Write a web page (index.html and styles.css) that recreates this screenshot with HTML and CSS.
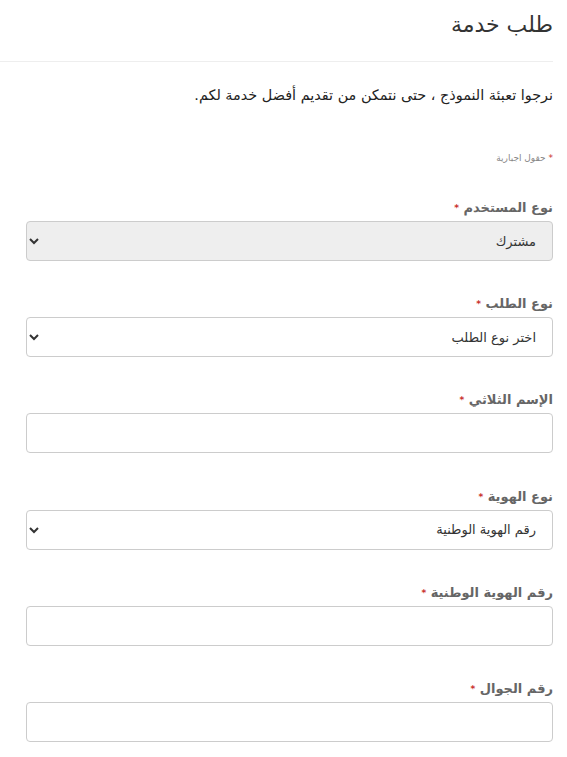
FILE: index.html
```html
<!DOCTYPE html>
<html lang="ar" dir="rtl">
<head>
<meta charset="utf-8">
<title>طلب خدمة</title>
<link rel="stylesheet" href="styles.css">
</head>
<body>
<main class="page">
  <header class="page-header">
    <h1 class="title">طلب خدمة</h1>
  </header>
  <p class="intro">نرجوا تعبئة النموذج ، حتى نتمكن من تقديم أفضل خدمة لكم.</p>
  <p class="required-note"><span class="star">*</span> حقول اجبارية</p>
  <form class="form">
    <div class="field">
      <label class="label">نوع المستخدم <span class="star">*</span></label>
      <select class="control select" disabled>
        <option>مشترك</option>
      </select>
    </div>
    <div class="field">
      <label class="label">نوع الطلب <span class="star">*</span></label>
      <select class="control select">
        <option>اختر نوع الطلب</option>
      </select>
    </div>
    <div class="field">
      <label class="label">الإسم الثلاثي <span class="star">*</span></label>
      <input class="control" type="text">
    </div>
    <div class="field">
      <label class="label">نوع الهوية <span class="star">*</span></label>
      <select class="control select">
        <option>رقم الهوية الوطنية</option>
      </select>
    </div>
    <div class="field">
      <label class="label">رقم الهوية الوطنية <span class="star">*</span></label>
      <input class="control" type="text">
    </div>
    <div class="field">
      <label class="label">رقم الجوال <span class="star">*</span></label>
      <input class="control" type="text">
    </div>
  </form>
</main>
</body>
</html>
```

FILE: styles.css
```css
html, body {
  margin: 0;
  padding: 0;
  background: #fff;
}
body {
  font-family: "DejaVu Sans", "Noto Sans", sans-serif;
  color: #333;
}
.page {
  padding: 0 14px 0 0;
}
.page-header {
  border-bottom: 1px solid #eee;
  padding: 6px 0 17px;
}
.title {
  margin: 0;
  font-size: 22px;
  font-weight: normal;
  line-height: 38px;
  color: #333;
}
.intro {
  margin: 21px 0 0 26px;
  font-size: 14.4px;
  line-height: 24px;
  color: #222;
}
.required-note {
  margin: 44px 0 0 26px;
  font-size: 9px;
  line-height: 14px;
  color: #888;
}
.star {
  color: #c9302c;
  font-size: 9px;
  vertical-align: top;
}
.form {
  margin: 33px 0 0 26px;
  display: flex;
  flex-direction: column;
  gap: 33.2px;
}
.field {
  display: flex;
  flex-direction: column;
  gap: 3px;
}
.label {
  font-size: 13px;
  font-weight: bold;
  color: #666;
  line-height: 20px;
}
.control {
  box-sizing: border-box;
  height: 40px;
  width: 100%;
  border: 1px solid #ccc;
  border-radius: 4px;
  background: #fff;
  font-family: "DejaVu Sans", sans-serif;
  font-size: 13px;
  color: #333;
  padding: 0 12px;
  margin: 0;
}
.select:disabled {
  background: #eee;
  color: #333;
  opacity: 1;
}
```
